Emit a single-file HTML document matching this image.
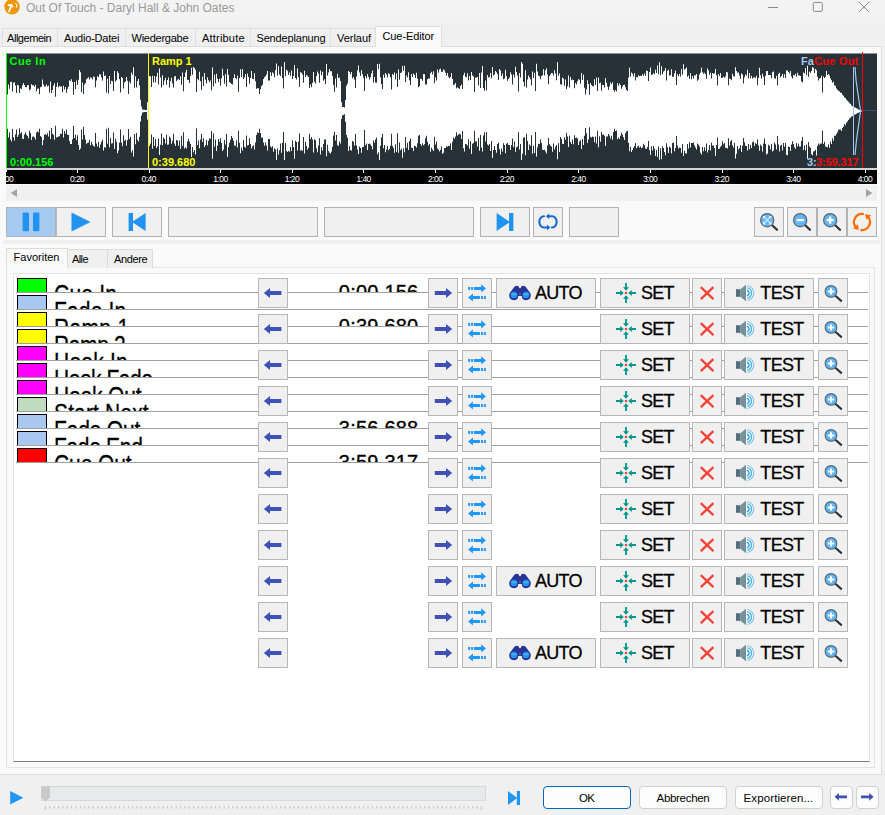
<!DOCTYPE html>
<html lang="de"><head><meta charset="utf-8"><title>Out Of Touch - Daryl Hall &amp; John Oates</title>
<style>
*{box-sizing:border-box;margin:0;padding:0}
html,body{width:885px;height:815px;overflow:hidden;background:#f0f0f0;font-family:"Liberation Sans",sans-serif;}
.abs{position:absolute}
#win{position:absolute;left:0;top:0;width:885px;height:815px;background:#f0f0f0;overflow:hidden}
#titlebar{position:absolute;left:0;top:0;width:885px;height:23px;background:#f3f3f3}
#title{position:absolute;left:26px;top:0.7px;font-size:12px;line-height:15px;color:#9a9a9a;white-space:nowrap;letter-spacing:-0.02px}
.tab{position:absolute;top:28px;height:19px;border:1px solid #e0e0e0;border-bottom:none;background:#f0f0f0;font-size:11px;line-height:18px;color:#000;white-space:nowrap;text-align:left}
.tab.sel{top:26px;height:21px;background:#fafafa;z-index:3;line-height:18px}
.wl{position:absolute;font-size:11px;line-height:12px;font-weight:bold;white-space:nowrap}
.rl{position:absolute;top:4px;font-size:8.5px;line-height:10px;color:#fff;text-align:center;letter-spacing:-0.55px;white-space:nowrap}
.itab{position:absolute;top:249px;height:19px;border:1px solid #dcdcdc;border-bottom:none;background:#f0f0f0;font-size:11px;line-height:19px;white-space:nowrap;color:#000;letter-spacing:-0.3px}
.itab.isel{top:248px;height:20px;background:#fafafa;line-height:16px}
.row{position:absolute;left:16px;width:852px;height:17px;border-bottom:1px solid #a0a0a0;overflow:hidden}
.sw{position:absolute;left:1px;top:2px;width:30px;height:20px;border:1px solid #000}
.nm{position:absolute;left:38px;top:2.6px;font-size:26px;line-height:30px;letter-spacing:0.37px;-webkit-text-stroke:0.3px #000;transform:scaleX(0.808);transform-origin:0 0;white-space:nowrap;color:#000}
.tm{position:absolute;left:322.8px;top:3.8px;font-size:20px;line-height:24px;letter-spacing:0.22px;-webkit-text-stroke:0.35px #000;white-space:nowrap;color:#000}
.bt{position:absolute;height:30px;border:1px solid #b6b6b6;background:#f0f0f0}
.bx{position:absolute;margin-top:-0.7px;height:30px;font-size:18px;line-height:30px;white-space:nowrap;color:#000;transform:scaleY(1.06);transform-origin:0 8px;-webkit-text-stroke:0.3px #000}
.wb{position:absolute;top:786px;height:23px;border:1px solid #d0d0d0;border-radius:4px;background:#fdfdfd;font-size:11.5px;line-height:22px;text-align:center;color:#000;white-space:nowrap;letter-spacing:-0.2px}
#page{position:absolute;left:0px;top:46px;width:882px;height:729px;background:#fafafa;border:1px solid #dedede;border-left:none}
</style></head>
<body>
<div id="win">
<div id="titlebar"></div>
<svg class="abs" style="left:0;top:0" width="24" height="20" viewBox="0 0 24 20"><circle cx="12.05" cy="6.8" r="7.75" fill="#ee960c"/><path d="M7.9 4.2 L12.1 4.1 L13.6 6.9 L12.3 7.7 L11.7 6.8 L9.9 12 Q9.4 12.8 8.6 12.3 Q8 11.9 8.3 11 L10.1 5.9 L8.2 6.2 Q7.3 5.2 7.9 4.2 Z" fill="#fff"/><path d="M15.1 2.9 Q17.7 3.5 17.5 5.6 L16.7 7.8 L15.7 7.5 L16.2 5.4 Q16 4.2 14.9 3.8 Z" fill="#fff"/></svg>
<div id="title">Out Of Touch - Daryl Hall &amp; John Oates</div>
<svg class="abs" style="left:760px;top:0" width="125" height="20" viewBox="0 0 125 20" fill="none" stroke="#8a8a8a" stroke-width="1"><path d="M8 7.5 H18"/><rect x="53.3" y="2.4" width="9" height="9" rx="1.2"/><path d="M99 2 L109 12 M109 2 L99 12"/></svg>
<div class="tab" style="left:2px;width:56px;padding-left:4px;letter-spacing:-0.45px">Allgemein</div>
<div class="tab" style="left:57px;width:69px;padding-left:6px;letter-spacing:-0.2px">Audio-Datei</div>
<div class="tab" style="left:125px;width:71px;padding-left:5.5px;letter-spacing:-0.25px">Wiedergabe</div>
<div class="tab" style="left:195px;width:56px;padding-left:6px;letter-spacing:0.2px">Attribute</div>
<div class="tab" style="left:250px;width:81px;padding-left:5.5px;letter-spacing:-0.17px">Sendeplanung</div>
<div class="tab" style="left:330px;width:47px;padding-left:6px;letter-spacing:-0.02px">Verlauf</div>
<div class="tab sel" style="left:375px;width:67px;padding-left:6.5px;letter-spacing:-0.1px">Cue-Editor</div>
<div id="page"></div>
<div class="abs" style="left:6px;top:53px;width:871px;height:115px;background:#263238;border-top:1px solid #8b9296"></div>
<svg class="abs" style="left:0;top:0" width="885" height="200" viewBox="0 0 885 200"><path d="M7 111.0V94.6H8V84.4H9V88.7H10V82.0H11V81.8H12V91.5H13V82.8H14V82.3H15V85.6H16V93.1H17V84.7H18V85.6H19V92.9H20V88.2H21V89.0H22V85.3H23V82.9H24V85.0H25V87.0H26V87.2H27V85.1H28V85.3H29V90.3H30V89.2H31V84.3H32V85.3H33V85.2H34V86.7H35V84.7H36V91.2H37V88.7H38V88.6H39V94.2H40V87.2H41V86.8H42V79.6H43V84.6H44V86.8H45V86.2H46V84.5H47V86.4H48V85.5H49V92.6H50V81.5H51V93.1H52V90.0H53V85.5H54V83.3H55V96.7H56V86.7H57V82.6H58V87.3H59V86.0H60V86.4H61V86.4H62V92.2H63V85.7H64V89.5H65V87.1H66V92.7H67V89.1H68V86.8H69V80.5H70V80.8H71V79.3H72V81.9H73V94.7H74V82.1H75V89.0H76V80.6H77V85.0H78V79.8H79V70.0H80V72.3H81V92.2H82V82.5H83V93.9H84V84.4H85V83.0H86V79.3H87V78.2H88V77.2H89V79.4H90V77.5H91V77.8H92V79.5H93V76.5H94V76.9H95V87.3H96V80.5H97V76.2H98V76.9H99V74.3H100V74.5H101V77.4H102V80.5H103V71.6H104V76.0H105V75.4H106V92.4H107V78.8H108V93.4H109V76.0H110V84.0H111V80.8H112V81.3H113V90.9H114V71.1H115V81.6H116V80.3H117V71.2H118V72.9H119V79.3H120V92.6H121V77.1H122V78.0H123V88.4H124V82.5H125V81.6H126V77.1H127V80.7H128V94.1H129V81.6H130V83.5H131V72.5H132V74.7H133V67.3H134V87.7H135V76.3H136V87.4H137V81.0H138V79.1H139V85.5H140V99.7H141V106.5H142V109.6H143V109.8H144V109.8H145V109.9H146V109.9H147V102.3H148V93.1H149V76.1H150V76.4H151V86.9H152V75.7H153V82.4H154V75.9H155V82.4H156V76.5H157V72.7H158V84.5H159V68.4H160V77.6H161V87.4H162V75.3H163V85.1H164V80.4H165V77.7H166V84.7H167V80.1H168V77.4H169V87.6H170V80.9H171V77.7H172V83.6H173V87.5H174V76.4H175V76.0H176V81.0H177V79.7H178V79.1H179V79.9H180V76.2H181V84.8H182V72.4H183V91.3H184V76.9H185V72.4H186V69.8H187V79.8H188V80.1H189V83.0H190V76.0H191V67.8H192V74.8H193V67.1H194V68.0H195V69.7H196V91.9H197V78.7H198V80.2H199V71.8H200V81.2H201V89.8H202V76.7H203V86.0H204V73.1H205V79.8H206V83.6H207V77.3H208V80.3H209V81.9H210V80.6H211V90.3H212V67.4H213V86.6H214V74.8H215V83.3H216V73.7H217V78.8H218V82.3H219V78.7H220V85.7H221V78.2H222V68.8H223V75.8H224V83.8H225V74.0H226V86.5H227V68.9H228V74.7H229V81.9H230V82.9H231V84.1H232V84.6H233V78.1H234V74.2H235V78.0H236V79.2H237V75.5H238V91.8H239V77.9H240V69.2H241V76.9H242V69.1H243V78.9H244V77.3H245V73.9H246V86.9H247V73.5H248V77.1H249V83.8H250V78.0H251V71.0H252V78.8H253V79.3H254V73.3H255V81.3H256V88.7H257V88.3H258V88.3H259V94.1H260V89.3H261V85.9H262V84.8H263V78.9H264V77.3H265V76.2H266V74.5H267V71.1H268V80.5H269V80.5H270V72.2H271V76.0H272V72.3H273V73.6H274V77.2H275V69.9H276V63.6H277V75.4H278V66.2H279V74.6H280V76.1H281V66.6H282V78.1H283V88.6H284V62.0H285V76.2H286V69.8H287V70.7H288V74.9H289V72.5H290V75.7H291V70.5H292V78.9H293V76.1H294V64.9H295V78.1H296V79.5H297V68.4H298V77.3H299V86.7H300V72.2H301V72.8H302V74.4H303V82.7H304V70.8H305V76.9H306V74.9H307V75.7H308V76.9H309V87.9H310V84.4H311V87.2H312V83.0H313V72.0H314V81.7H315V83.4H316V76.1H317V71.6H318V73.6H319V82.8H320V70.4H321V75.2H322V71.7H323V80.8H324V79.3H325V83.9H326V64.1H327V75.5H328V72.4H329V69.0H330V71.2H331V71.2H332V76.1H333V84.7H334V91.8H335V78.6H336V87.5H337V73.7H338V78.0H339V77.5H340V81.1H341V102.2H342V107.1H343V107.1H344V107.4H345V99.9H346V85.7H347V83.5H348V71.1H349V72.0H350V73.9H351V71.9H352V78.3H353V76.9H354V79.4H355V88.1H356V76.5H357V70.5H358V65.5H359V72.6H360V76.1H361V70.3H362V74.3H363V77.8H364V91.0H365V75.9H366V78.3H367V74.0H368V76.8H369V79.4H370V77.2H371V73.3H372V70.6H373V82.6H374V76.9H375V82.6H376V82.7H377V64.1H378V68.9H379V63.7H380V77.2H381V83.9H382V89.2H383V74.8H384V77.7H385V72.9H386V74.4H387V77.4H388V73.2H389V74.1H390V77.2H391V89.5H392V74.0H393V74.9H394V72.5H395V79.6H396V73.5H397V87.1H398V69.5H399V79.8H400V72.9H401V72.6H402V65.9H403V70.7H404V65.7H405V82.1H406V75.6H407V77.4H408V72.2H409V80.3H410V85.0H411V74.0H412V77.1H413V73.5H414V74.8H415V77.9H416V72.7H417V78.4H418V87.3H419V86.1H420V78.8H421V79.0H422V80.7H423V74.1H424V74.3H425V84.5H426V84.4H427V79.3H428V78.4H429V78.6H430V73.2H431V71.8H432V74.4H433V71.3H434V83.2H435V77.3H436V80.4H437V69.5H438V72.8H439V69.6H440V68.8H441V71.8H442V71.7H443V69.4H444V70.2H445V72.7H446V75.5H447V73.0H448V76.7H449V78.3H450V76.9H451V73.2H452V79.0H453V85.1H454V84.5H455V83.0H456V88.3H457V87.2H458V88.0H459V89.1H460V86.0H461V84.5H462V88.9H463V75.0H464V72.8H465V76.8H466V77.2H467V73.2H468V80.5H469V76.1H470V80.0H471V71.9H472V75.5H473V76.6H474V92.0H475V77.7H476V77.6H477V77.1H478V85.6H479V72.9H480V88.1H481V72.5H482V66.1H483V88.0H484V90.7H485V80.4H486V90.3H487V74.9H488V77.4H489V77.1H490V73.1H491V78.2H492V67.0H493V75.5H494V74.6H495V71.1H496V72.3H497V74.2H498V80.1H499V68.9H500V70.4H501V76.0H502V73.6H503V79.2H504V78.5H505V69.7H506V76.3H507V80.8H508V78.9H509V77.6H510V72.3H511V74.6H512V84.4H513V74.4H514V77.6H515V66.8H516V72.1H517V75.5H518V91.6H519V73.0H520V77.4H521V62.0H522V63.8H523V81.9H524V86.5H525V70.1H526V87.8H527V79.6H528V75.4H529V77.2H530V79.3H531V85.6H532V71.4H533V78.0H534V72.8H535V90.9H536V63.7H537V71.6H538V75.7H539V76.3H540V79.3H541V75.9H542V75.3H543V68.9H544V75.4H545V70.2H546V68.3H547V74.5H548V84.3H549V76.1H550V74.6H551V73.1H552V73.3H553V75.4H554V70.1H555V73.4H556V80.2H557V62.0H558V75.8H559V73.5H560V84.3H561V84.8H562V77.8H563V78.5H564V85.8H565V79.6H566V89.3H567V86.2H568V75.6H569V87.4H570V76.9H571V80.2H572V79.5H573V80.1H574V88.3H575V83.1H576V84.6H577V81.3H578V79.2H579V79.7H580V83.7H581V73.0H582V79.9H583V74.7H584V87.8H585V94.6H586V89.3H587V80.2H588V84.0H589V94.7H590V83.1H591V85.0H592V85.9H593V86.6H594V79.3H595V84.9H596V77.4H597V91.0H598V77.4H599V83.2H600V82.6H601V90.7H602V85.0H603V85.1H604V87.6H605V78.1H606V82.8H607V86.4H608V89.8H609V86.5H610V82.4H611V84.2H612V82.3H613V90.1H614V91.8H615V90.1H616V91.6H617V83.2H618V85.7H619V83.5H620V84.9H621V88.8H622V86.5H623V85.0H624V84.7H625V87.2H626V90.1H627V91.1H628V77.4H629V67.7H630V76.4H631V72.5H632V73.7H633V76.2H634V73.2H635V80.6H636V76.9H637V77.3H638V75.3H639V75.9H640V75.8H641V75.9H642V74.2H643V75.8H644V73.6H645V75.8H646V70.6H647V71.1H648V81.1H649V72.1H650V67.4H651V74.8H652V74.8H653V73.1H654V74.0H655V69.7H656V73.1H657V65.4H658V74.3H659V62.3H660V75.2H661V66.3H662V74.2H663V71.5H664V70.8H665V67.9H666V80.5H667V70.8H668V69.7H669V75.6H670V75.2H671V69.2H672V76.8H673V76.8H674V73.2H675V70.6H676V84.9H677V74.2H678V76.3H679V74.1H680V76.6H681V68.7H682V74.8H683V64.3H684V69.7H685V68.8H686V67.6H687V76.8H688V75.6H689V78.8H690V72.9H691V79.2H692V75.9H693V78.5H694V75.2H695V75.6H696V74.1H697V80.7H698V79.4H699V74.5H700V72.7H701V67.7H702V72.2H703V73.8H704V72.7H705V74.0H706V78.8H707V68.6H708V70.4H709V74.8H710V72.7H711V78.4H712V73.1H713V73.8H714V73.3H715V69.1H716V75.3H717V85.5H718V74.1H719V75.9H720V72.9H721V78.0H722V77.8H723V76.4H724V77.7H725V76.5H726V72.0H727V72.4H728V85.3H729V78.5H730V78.9H731V80.3H732V73.7H733V76.3H734V76.5H735V67.3H736V70.9H737V72.7H738V72.6H739V75.6H740V78.7H741V73.5H742V74.4H743V83.4H744V77.3H745V74.4H746V75.6H747V69.7H748V78.5H749V73.1H750V78.3H751V75.8H752V78.4H753V77.5H754V77.3H755V77.8H756V75.7H757V85.2H758V78.0H759V67.8H760V75.2H761V78.8H762V73.7H763V76.7H764V85.0H765V75.8H766V70.9H767V71.1H768V74.9H769V75.1H770V75.0H771V78.2H772V72.2H773V71.5H774V78.1H775V78.7H776V75.8H777V85.6H778V73.7H779V72.7H780V77.3H781V76.1H782V73.9H783V77.7H784V74.2H785V77.9H786V70.5H787V70.5H788V71.9H789V73.6H790V70.9H791V76.4H792V78.6H793V75.1H794V75.4H795V73.7H796V76.8H797V72.8H798V75.3H799V75.5H800V76.1H801V81.4H802V82.6H803V72.5H804V73.6H805V68.0H806V75.1H807V65.7H808V76.9H809V71.7H810V72.8H811V71.0H812V67.2H813V67.7H814V73.0H815V69.1H816V70.3H817V76.8H818V80.5H819V78.5H820V78.0H821V75.7H822V92.6H823V76.5H824V78.0H825V76.8H826V71.1H827V74.9H828V73.9H829V75.5H830V78.3H831V80.2H832V82.7H833V81.8H834V85.5H835V85.8H836V88.5H837V89.7H838V90.8H839V91.5H840V92.8H841V92.7H842V94.7H843V95.7H844V97.5H845V97.9H846V99.8H847V100.7H848V101.8H849V103.1H850V104.1H851V105.4H852V106.3H853V106.6H854V107.3H855V107.8H856V108.2H857V108.8H858V109.4H859V109.9H860V110.4H861V110.5H862V111.0V111.5H861V111.6H860V112.1H859V112.8H858V113.0H857V113.7H856V114.4H855V114.4H854V115.4H853V116.0H852V116.5H851V117.7H850V118.6H849V120.0H848V121.6H847V122.8H846V125.2H845V123.9H844V126.7H843V128.1H842V131.1H841V129.5H840V129.6H839V129.8H838V132.2H837V133.9H836V135.7H835V135.8H834V140.7H833V138.3H832V144.1H831V141.5H830V147.8H829V144.6H828V147.2H827V147.0H826V146.5H825V141.7H824V144.0H823V130.5H822V143.6H821V143.6H820V144.7H819V143.4H818V145.9H817V155.4H816V149.7H815V151.0H814V151.4H813V155.3H812V154.2H811V147.7H810V146.5H809V142.1H808V158.8H807V144.5H806V150.5H805V145.5H804V149.9H803V137.0H802V141.1H801V146.4H800V146.4H799V143.8H798V146.2H797V143.0H796V148.8H795V147.2H794V143.9H793V141.3H792V144.6H791V151.0H790V146.9H789V146.7H788V155.3H787V154.8H786V142.9H785V146.7H784V142.9H783V150.5H782V144.8H781V145.8H780V151.5H779V144.6H778V136.1H777V149.5H776V144.5H775V142.6H774V150.4H773V151.4H772V144.3H771V149.4H770V146.0H769V144.8H768V153.5H767V154.6H766V144.0H765V138.4H764V143.6H763V151.6H762V145.9H761V144.5H760V150.8H759V145.4H758V139.3H757V144.0H756V143.0H755V146.0H754V141.6H753V142.2H752V148.0H751V144.8H750V149.3H749V143.9H748V150.6H747V146.0H746V145.7H745V142.3H744V138.1H743V145.8H742V152.0H741V145.2H740V148.3H739V149.4H738V145.9H737V153.7H736V158.4H735V142.7H734V147.5H733V145.2H732V139.9H731V141.5H730V145.8H729V138.2H728V148.5H727V148.1H726V147.8H725V143.0H724V144.2H723V141.2H722V145.6H721V146.7H720V148.5H719V149.1H718V137.4H717V145.1H716V156.1H715V147.9H714V145.4H713V145.6H712V142.7H711V150.5H710V144.9H709V150.1H708V152.4H707V143.5H706V150.8H705V147.3H704V151.2H703V147.0H702V154.4H701V152.8H700V146.5H699V144.8H698V143.4H697V149.4H696V147.6H695V145.3H694V142.5H693V143.0H692V143.0H691V147.5H690V142.2H689V148.4H688V143.9H687V153.4H686V153.2H685V150.7H684V156.0H683V143.9H682V152.8H681V148.1H680V147.5H679V148.5H678V145.4H677V136.1H676V147.9H675V151.3H674V142.4H673V142.9H672V153.4H671V147.8H670V146.4H669V153.0H668V147.2H667V143.2H666V155.3H665V152.1H664V148.1H663V146.2H662V159.2H661V148.2H660V159.8H659V146.4H658V156.9H657V149.9H656V156.1H655V148.4H654V145.9H653V150.4H652V146.2H651V154.7H650V150.2H649V140.9H648V147.0H647V149.0H646V148.6H645V145.3H644V143.7H643V147.4H642V148.2H641V146.6H640V147.7H639V145.8H638V146.6H637V148.2H636V143.0H635V146.0H634V147.7H633V150.1H632V152.0H631V146.8H630V151.3H629V142.7H628V130.7H627V131.6H626V133.2H625V139.9H624V137.3H623V134.8H622V132.7H621V135.8H620V139.1H619V137.4H618V139.2H617V130.6H616V131.1H615V128.8H614V132.0H613V139.8H612V135.8H611V138.4H610V135.6H609V134.0H608V136.5H607V136.6H606V145.9H605V135.7H604V134.4H603V134.7H602V131.9H601V141.8H600V136.3H599V147.3H598V130.7H597V143.5H596V136.6H595V142.2H594V137.0H593V136.4H592V137.4H591V136.8H590V127.3H589V139.2H588V143.1H587V133.2H586V128.0H585V135.7H584V145.0H583V139.1H582V149.1H581V140.3H580V141.6H579V145.1H578V138.4H577V137.5H576V138.1H575V135.3H574V144.2H573V139.5H572V144.0H571V142.1H570V135.7H569V147.0H568V136.4H567V132.7H566V139.7H565V137.6H564V143.9H563V143.8H562V138.9H561V136.9H560V152.1H559V143.1H558V159.3H557V144.9H556V146.8H555V149.6H554V143.5H553V151.8H552V146.4H551V145.7H550V144.3H549V138.0H548V145.5H547V153.5H546V151.4H545V149.7H544V150.1H543V149.8H542V142.9H541V139.6H540V143.9H539V143.7H538V147.3H537V156.4H536V132.1H535V152.9H534V145.8H533V153.8H532V135.2H531V145.8H530V144.5H529V149.9H528V140.9H527V133.7H526V155.2H525V137.3H524V137.7H523V153.8H522V160.0H521V144.1H520V149.5H519V132.3H518V146.6H517V147.2H516V151.7H515V141.4H514V146.9H513V138.6H512V145.1H511V149.9H510V144.9H509V145.0H508V143.0H507V143.7H506V153.2H505V145.1H504V143.2H503V151.5H502V148.5H501V154.6H500V149.3H499V142.4H498V144.1H497V152.7H496V149.9H495V146.0H494V149.9H493V157.9H492V140.9H491V151.1H490V144.1H489V145.5H488V144.5H487V132.0H486V141.5H485V132.2H484V135.5H483V151.5H482V147.6H481V134.9H480V150.8H479V137.8H478V146.5H477V141.2H476V141.5H475V130.7H474V143.0H473V143.7H472V153.9H471V141.3H470V148.8H469V139.2H468V145.5H467V144.3H466V143.9H465V151.4H464V148.2H463V131.0H462V138.9H461V134.6H460V133.8H459V134.5H458V135.6H457V132.3H456V136.4H455V138.7H454V137.6H453V141.8H452V150.0H451V143.6H450V145.9H449V145.7H448V146.8H447V146.3H446V148.0H445V148.0H444V152.7H443V153.7H442V146.5H441V149.7H440V151.4H439V149.7H438V148.4H437V141.5H436V144.5H435V136.8H434V151.1H433V149.4H432V147.8H431V151.8H430V144.1H429V145.5H428V141.7H427V135.7H426V138.3H425V144.2H424V145.3H423V143.3H422V145.7H421V144.0H420V134.9H419V135.8H418V143.2H417V147.5H416V146.3H415V145.7H414V150.9H413V148.0H412V147.7H411V138.4H410V141.0H409V150.0H408V142.7H407V147.8H406V137.1H405V152.3H404V148.2H403V157.7H402V148.7H401V150.2H400V142.4H399V152.7H398V133.3H397V152.1H396V144.2H395V152.8H394V148.0H393V146.1H392V133.8H391V145.7H390V148.9H389V150.3H388V146.1H387V149.4H386V152.2H385V145.0H384V148.2H383V134.1H382V137.5H381V145.8H380V160.0H379V152.2H378V154.2H377V137.5H376V139.5H375V142.7H374V140.6H373V149.3H372V145.9H371V144.4H370V143.6H369V144.0H368V149.9H367V143.5H366V145.3H365V130.0H364V146.8H363V147.0H362V152.8H361V147.9H360V146.4H359V153.9H358V149.5H357V145.5H356V133.9H355V145.6H354V141.7H353V141.0H352V150.4H351V150.2H350V146.3H349V151.0H348V137.8H347V135.1H346V121.7H345V114.3H344V115.0H343V115.2H342V119.1H341V143.5H340V141.6H339V146.1H338V145.0H337V135.1H336V140.4H335V131.8H334V135.4H333V146.7H332V151.4H331V153.6H330V152.8H329V151.1H328V144.7H327V156.3H326V139.4H325V139.6H324V144.0H323V150.5H322V147.2H321V154.4H320V138.3H319V145.5H318V152.3H317V148.3H316V140.2H315V139.2H314V152.4H313V139.6H312V137.0H311V139.1H310V133.7H309V147.8H308V149.4H307V146.0H306V141.8H305V153.5H304V137.0H303V150.8H302V150.2H301V150.4H300V133.4H299V141.5H298V150.4H297V142.1H296V140.8H295V158.7H294V146.9H293V140.2H292V151.1H291V146.9H290V151.8H289V150.7H288V151.9H287V151.0H286V143.1H285V160.0H284V131.9H283V142.7H282V152.8H281V143.4H280V150.3H279V154.4H278V148.6H277V160.0H276V149.6H275V148.2H274V151.8H273V146.2H272V147.6H271V146.2H270V139.0H269V139.1H268V150.6H267V145.6H266V142.5H265V145.8H264V142.6H263V137.4H262V137.8H261V133.0H260V128.7H259V133.1H258V132.4H257V134.9H256V142.4H255V149.6H254V145.3H253V146.2H252V148.6H251V143.9H250V138.3H249V144.9H248V145.4H247V135.4H246V147.8H245V146.8H244V139.9H243V150.4H242V147.6H241V153.3H240V142.8H239V130.9H238V147.5H237V140.2H236V146.0H235V145.5H234V140.7H233V137.9H232V136.0H231V139.8H230V142.7H229V147.0H228V156.8H227V134.0H226V144.6H225V139.9H224V149.6H223V150.9H222V143.1H221V138.2H220V141.7H219V139.0H218V145.4H217V150.9H216V139.4H215V146.8H214V133.4H213V158.8H212V131.0H211V138.8H210V138.3H209V140.8H208V145.4H207V139.7H206V144.9H205V147.0H204V138.3H203V142.0H202V134.0H201V139.4H200V148.3H199V140.4H198V144.9H197V128.4H196V154.6H195V150.0H194V152.2H193V147.0H192V156.9H191V143.9H190V141.6H189V138.8H188V141.4H187V148.4H186V147.2H185V148.5H184V132.2H183V146.1H182V135.7H181V148.9H180V140.4H179V145.7H178V140.6H177V139.9H176V146.0H175V143.5H174V133.7H173V140.7H172V143.8H171V138.2H170V136.6H169V144.4H168V144.7H167V134.8H166V143.6H165V139.0H164V137.6H163V145.3H162V133.4H161V144.8H160V154.8H159V138.4H158V146.3H157V148.0H156V139.0H155V145.9H154V136.9H153V148.7H152V134.6H151V143.6H150V145.9H149V128.1H148V119.4H147V112.0H146V112.1H145V112.1H144V112.2H143V112.6H142V115.5H141V121.5H140V136.8H139V141.4H138V139.8H137V132.9H136V144.2H135V134.1H134V156.6H133V150.3H132V152.4H131V136.8H130V138.9H129V129.1H128V140.0H127V145.5H126V139.6H125V140.7H124V135.2H123V146.3H122V142.5H121V129.4H120V142.6H119V150.6H118V153.3H117V141.8H116V138.7H115V149.1H114V132.4H113V143.2H112V143.6H111V137.8H110V147.2H109V127.8H108V143.7H107V128.7H106V147.6H105V147.3H104V150.4H103V139.7H102V141.7H101V144.4H100V147.7H99V141.7H98V146.6H97V143.6H96V132.9H95V146.5H94V146.1H93V144.6H92V141.8H91V145.3H90V139.7H89V142.4H88V143.1H87V143.7H86V139.5H85V135.1H84V126.7H83V139.5H82V129.7H81V148.6H80V149.9H79V145.1H78V135.3H77V139.9H76V134.6H75V138.0H74V125.9H73V139.2H72V144.0H71V144.1H70V140.9H69V134.9H68V134.8H67V129.5H66V133.7H65V131.1H64V137.6H63V128.7H62V133.7H61V133.8H60V136.3H59V136.4H58V137.1H57V137.5H56V125.8H55V139.8H54V134.7H53V133.7H52V128.1H51V139.1H50V130.5H49V136.6H48V133.2H47V135.0H46V134.3H45V134.8H44V140.0H43V145.2H42V137.0H41V135.9H40V128.7H39V132.2H38V131.6H37V132.5H36V139.6H35V137.5H34V136.6H33V136.7H32V139.9H31V132.9H30V130.7H29V138.2H28V136.0H27V134.7H26V132.6H25V134.5H24V139.1H23V138.8H22V132.3H21V133.4H20V128.2H19V134.9H18V136.9H17V129.4H16V134.5H15V140.6H14V137.2H13V129.1H12V141.6H11V139.4H10V132.5H9V137.5H8V128.8H7Z" fill="#fff"/><path d="M863 110.5H877" stroke="#34506a" stroke-width="1"/><path d="M853.5 67V155" stroke="#a6c8f0" stroke-width="1" fill="none"/><path d="M855 67 L856 80 L860.5 111 L856.5 140 L855 155" stroke="#a6c8f0" stroke-width="1.2" fill="none"/></svg>
<div class="abs" style="left:6px;top:53px;width:1px;height:116px;background:#00ff00"></div>
<div class="abs" style="left:148px;top:53px;width:1px;height:116px;background:#ffff00"></div>
<div class="abs" style="left:862px;top:52px;width:1.4px;height:117px;background:#ff0000"></div>
<div class="wl" style="left:9.5px;top:55px;color:#00ff00;letter-spacing:0.5px">Cue In</div>
<div class="wl" style="left:10px;top:156px;color:#00ff00">0:00.156</div>
<div class="wl" style="left:152px;top:55px;color:#ffff00">Ramp 1</div>
<div class="wl" style="left:152px;top:156px;color:#ffff00">0:39.680</div>
<div class="wl" style="left:801px;top:55px;color:#a6c8f0">Fa</div>
<div class="wl" style="left:814px;top:55px;color:#ff0000;background:#263238;letter-spacing:0.25px">Cue Out</div>
<div class="wl" style="left:807px;top:156px;color:#a6c8f0">3:</div>
<div class="wl" style="left:816px;top:156px;color:#ff0000;background:#263238;letter-spacing:-0.1px">3:59.317</div>
<div class="abs" style="left:6px;top:168px;width:871px;height:2px;background:#d4d4d4"></div>
<div class="abs" style="left:6px;top:170px;width:871px;height:14px;background:#000;overflow:hidden"><div class="abs" style="left:-0.7px;top:0;width:1px;height:3px;background:#fff"></div><div class="rl" style="left:-1.2px;width:20px;text-align:left">00</div><div class="abs" style="left:0;top:0;width:1px;height:2px;background:#fff"></div><div class="abs" style="left:70.9px;top:0;width:1px;height:3px;background:#fff"></div><div class="rl" style="left:56.1px;width:30px">0:20</div><div class="abs" style="left:142.5px;top:0;width:1px;height:3px;background:#fff"></div><div class="rl" style="left:127.7px;width:30px">0:40</div><div class="abs" style="left:214.2px;top:0;width:1px;height:3px;background:#fff"></div><div class="rl" style="left:199.4px;width:30px">1:00</div><div class="abs" style="left:285.8px;top:0;width:1px;height:3px;background:#fff"></div><div class="rl" style="left:271.0px;width:30px">1:20</div><div class="abs" style="left:357.4px;top:0;width:1px;height:3px;background:#fff"></div><div class="rl" style="left:342.6px;width:30px">1:40</div><div class="abs" style="left:429.0px;top:0;width:1px;height:3px;background:#fff"></div><div class="rl" style="left:414.2px;width:30px">2:00</div><div class="abs" style="left:500.6px;top:0;width:1px;height:3px;background:#fff"></div><div class="rl" style="left:485.8px;width:30px">2:20</div><div class="abs" style="left:572.3px;top:0;width:1px;height:3px;background:#fff"></div><div class="rl" style="left:557.5px;width:30px">2:40</div><div class="abs" style="left:643.9px;top:0;width:1px;height:3px;background:#fff"></div><div class="rl" style="left:629.1px;width:30px">3:00</div><div class="abs" style="left:715.5px;top:0;width:1px;height:3px;background:#fff"></div><div class="rl" style="left:700.7px;width:30px">3:20</div><div class="abs" style="left:787.1px;top:0;width:1px;height:3px;background:#fff"></div><div class="rl" style="left:772.3px;width:30px">3:40</div><div class="abs" style="left:858.7px;top:0;width:1px;height:3px;background:#fff"></div><div class="rl" style="left:843.9px;width:30px">4:00</div></div>
<div class="abs" style="left:6px;top:185px;width:871px;height:16px;background:#f0f0f0"></div>
<svg class="abs" style="left:6px;top:184px" width="871" height="17" viewBox="0 0 871 17"><path d="M4.7 9 L11 5 V13 Z" fill="#a3a3a3"/><path d="M866.3 9 L860 5 V13 Z" fill="#a3a3a3"/></svg>
<div style="position:absolute;top:207px;height:30px;border:1px solid #b2b2b2;background:#f0f0f0;left:6px;width:50px;background:#a7caf0;border-color:#b0b4b8"></div>
<div style="position:absolute;top:207px;height:30px;border:1px solid #b2b2b2;background:#f0f0f0;left:56px;width:50px;border-left-color:#b9b9b9"></div>
<div style="position:absolute;top:207px;height:30px;border:1px solid #b2b2b2;background:#f0f0f0;left:112px;width:50px;"></div>
<div style="position:absolute;top:207px;height:30px;border:1px solid #b2b2b2;background:#f0f0f0;left:168px;width:150px;"></div>
<div style="position:absolute;top:207px;height:30px;border:1px solid #b2b2b2;background:#f0f0f0;left:324px;width:150px;"></div>
<div style="position:absolute;top:207px;height:30px;border:1px solid #b2b2b2;background:#f0f0f0;left:480px;width:50px;"></div>
<div style="position:absolute;top:207px;height:30px;border:1px solid #b2b2b2;background:#f0f0f0;left:533px;width:30px;"></div>
<div style="position:absolute;top:207px;height:30px;border:1px solid #b2b2b2;background:#f0f0f0;left:569px;width:50px;"></div>
<div style="position:absolute;top:207px;height:30px;border:1px solid #b2b2b2;background:#f0f0f0;left:754px;width:30px;"></div>
<div style="position:absolute;top:207px;height:30px;border:1px solid #b2b2b2;background:#f0f0f0;left:787px;width:30px;"></div>
<div style="position:absolute;top:207px;height:30px;border:1px solid #b2b2b2;background:#f0f0f0;left:817px;width:30px;"></div>
<div style="position:absolute;top:207px;height:30px;border:1px solid #b2b2b2;background:#f0f0f0;left:847px;width:30px;"></div>
<svg class="abs" style="left:0;top:200px" width="885" height="45" viewBox="0 200 885 45"><rect x="22.6" y="212.6" width="6.4" height="18.6" rx="1" fill="#2093f1"/><rect x="33" y="212.6" width="6.4" height="18.6" rx="1" fill="#2093f1"/><path d="M71.8 213 L90 222 L71.8 231 Z" fill="#2093f1" stroke="#2093f1" stroke-width="0.6" stroke-linejoin="round"/><rect x="128.6" y="213" width="4.4" height="18" fill="#2093f1"/><path d="M145.6 213 L132 222 L145.6 231 Z" fill="#2093f1"/><rect x="509" y="213" width="4.4" height="18" fill="#2093f1"/><path d="M496.6 213 L510 222 L496.6 231 Z" fill="#2093f1"/><g fill="none" stroke="#1668cf" stroke-width="2.1" stroke-linecap="round"><path d="M544 216.2 A4.7 5.65 0 0 0 544 227.5 H547"/><path d="M552 227.5 A4.7 5.65 0 0 0 552 216.2 H549"/></g><path d="M547 224.6 L550.4 227.5 L547 230.2 Z" fill="#1668cf"/><path d="M549.2 213.6 L545.8 216.3 L549.2 219 Z" fill="#1668cf"/><path d="M772.2 225.2 L777.0 229.79999999999998" stroke="#263238" stroke-width="2.2" stroke-linecap="round"/><circle cx="767.2" cy="220.2" r="6.6" fill="#64b5f6" stroke="#5a666c" stroke-width="1.2"/><path d="M764.2 217.2 L770.2 223.2 M770.2 217.2 L764.2 223.2" stroke="#d6ecfd" stroke-width="1.1"/><path d="M763.0 216.0 L765.8000000000001 216.0 L763.0 218.79999999999998 Z" fill="#fff"/><path d="M771.4000000000001 216.0 L768.6 216.0 L771.4000000000001 218.79999999999998 Z" fill="#fff"/><path d="M763.0 224.39999999999998 L765.8000000000001 224.39999999999998 L763.0 221.6 Z" fill="#fff"/><path d="M771.4000000000001 224.39999999999998 L768.6 224.39999999999998 L771.4000000000001 221.6 Z" fill="#fff"/><path d="M805.2 225.2 L810.0 229.79999999999998" stroke="#263238" stroke-width="2.2" stroke-linecap="round"/><circle cx="800.2" cy="220.2" r="6.6" fill="#64b5f6" stroke="#5a666c" stroke-width="1.2"/><rect x="796.6" y="219.1" width="7.2" height="2.2" rx="0.6" fill="#fff"/><path d="M835.2 225.2 L840.0 229.79999999999998" stroke="#263238" stroke-width="2.2" stroke-linecap="round"/><circle cx="830.2" cy="220.2" r="6.6" fill="#64b5f6" stroke="#5a666c" stroke-width="1.2"/><rect x="826.6" y="219.1" width="7.2" height="2.2" rx="0.6" fill="#fff"/><rect x="829.1" y="216.6" width="2.2" height="7.2" rx="0.6" fill="#fff"/><g fill="none" stroke="#ff6d00" stroke-width="2.2"><path d="M863.8 214.1 A8 8 0 0 0 856.2 227.4"/><path d="M860.5 229.9 A8 8 0 0 0 868.3 217.2"/></g><path d="M858.8 229.9 L852.9 228.5 L857.9 224.2 Z" fill="#ff6d00"/><path d="M865 214.2 L871.2 215.2 L866.5 219.8 Z" fill="#ff6d00"/></svg>
<div class="abs" style="left:3px;top:240px;width:877px;height:4px;background:#f0f0f0"></div>
<div class="abs" style="left:6px;top:267px;width:869px;height:501px;border:1px solid #e4e4e4;background:#fafafa"></div>
<div class="itab" style="left:67px;width:41px;padding-left:4px;letter-spacing:-0.6px">Alle</div>
<div class="itab" style="left:107px;width:46px;padding-left:6px;letter-spacing:-0.35px">Andere</div>
<div class="itab isel" style="left:6px;width:62px;padding-left:6.6px;letter-spacing:0px">Favoriten</div>
<div class="abs" style="left:13px;top:273px;width:857px;height:489px;border:1px solid #e3e3e3;border-bottom:1px solid #7c7c7c;background:#fff"></div>
<div class="row" style="top:276px"><div class="sw" style="background:#00ff00"></div><div class="nm" style="letter-spacing:0.27px">Cue In</div><div class="tm">0:00.156</div></div>
<div class="row" style="top:293px"><div class="sw" style="background:#a8c8f0"></div><div class="nm" style="letter-spacing:0.21px">Fade In</div></div>
<div class="row" style="top:310px"><div class="sw" style="background:#ffff00"></div><div class="nm" style="letter-spacing:0.38px">Ramp 1</div><div class="tm">0:39.680</div></div>
<div class="row" style="top:327px"><div class="sw" style="background:#ffff00"></div><div class="nm" style="letter-spacing:-0.47px">Ramp 2</div></div>
<div class="row" style="top:344px"><div class="sw" style="background:#ff00ff"></div><div class="nm" style="letter-spacing:0.27px">Hook In</div></div>
<div class="row" style="top:361px"><div class="sw" style="background:#ff00ff"></div><div class="nm" style="letter-spacing:-0.59px">Hook Fade</div></div>
<div class="row" style="top:378px"><div class="sw" style="background:#ff00ff"></div><div class="nm" style="letter-spacing:-0.22px">Hook Out</div></div>
<div class="row" style="top:395px"><div class="sw" style="background:#c0dcc0"></div><div class="nm" style="letter-spacing:0.17px">Start Next</div></div>
<div class="row" style="top:412px"><div class="sw" style="background:#a8c8f0"></div><div class="nm" style="letter-spacing:-0.24px">Fade Out</div><div class="tm">3:56.688</div></div>
<div class="row" style="top:429px"><div class="sw" style="background:#a8c8f0"></div><div class="nm" style="letter-spacing:-0.4px">Fade End</div></div>
<div class="row" style="top:446px"><div class="sw" style="background:#ff0000"></div><div class="nm" style="letter-spacing:-0.14px">Cue Out</div><div class="tm">3:59.317</div></div>
<div class="bt" style="left:258px;top:278px;width:30px"></div><div class="bt" style="left:428px;top:278px;width:30px"></div><div class="bt" style="left:462px;top:278px;width:30px"></div><div class="bt" style="left:600px;top:278px;width:90px"></div><div class="bt" style="left:692px;top:278px;width:30px"></div><div class="bt" style="left:724px;top:278px;width:90px"></div><div class="bt" style="left:818px;top:278px;width:30px"></div><div class="bt" style="left:496px;top:278px;width:100px"></div><div class="bx" style="left:535px;top:278px;letter-spacing:-0.7px">AUTO</div><div class="bx" style="left:641px;top:278px;letter-spacing:-0.7px">SET</div><div class="bx" style="left:760.3px;top:278px;letter-spacing:-0.65px">TEST</div>
<div class="bt" style="left:258px;top:314px;width:30px"></div><div class="bt" style="left:428px;top:314px;width:30px"></div><div class="bt" style="left:462px;top:314px;width:30px"></div><div class="bt" style="left:600px;top:314px;width:90px"></div><div class="bt" style="left:692px;top:314px;width:30px"></div><div class="bt" style="left:724px;top:314px;width:90px"></div><div class="bt" style="left:818px;top:314px;width:30px"></div><div class="bx" style="left:641px;top:314px;letter-spacing:-0.7px">SET</div><div class="bx" style="left:760.3px;top:314px;letter-spacing:-0.65px">TEST</div>
<div class="bt" style="left:258px;top:350px;width:30px"></div><div class="bt" style="left:428px;top:350px;width:30px"></div><div class="bt" style="left:462px;top:350px;width:30px"></div><div class="bt" style="left:600px;top:350px;width:90px"></div><div class="bt" style="left:692px;top:350px;width:30px"></div><div class="bt" style="left:724px;top:350px;width:90px"></div><div class="bt" style="left:818px;top:350px;width:30px"></div><div class="bx" style="left:641px;top:350px;letter-spacing:-0.7px">SET</div><div class="bx" style="left:760.3px;top:350px;letter-spacing:-0.65px">TEST</div>
<div class="bt" style="left:258px;top:386px;width:30px"></div><div class="bt" style="left:428px;top:386px;width:30px"></div><div class="bt" style="left:462px;top:386px;width:30px"></div><div class="bt" style="left:600px;top:386px;width:90px"></div><div class="bt" style="left:692px;top:386px;width:30px"></div><div class="bt" style="left:724px;top:386px;width:90px"></div><div class="bt" style="left:818px;top:386px;width:30px"></div><div class="bx" style="left:641px;top:386px;letter-spacing:-0.7px">SET</div><div class="bx" style="left:760.3px;top:386px;letter-spacing:-0.65px">TEST</div>
<div class="bt" style="left:258px;top:422px;width:30px"></div><div class="bt" style="left:428px;top:422px;width:30px"></div><div class="bt" style="left:462px;top:422px;width:30px"></div><div class="bt" style="left:600px;top:422px;width:90px"></div><div class="bt" style="left:692px;top:422px;width:30px"></div><div class="bt" style="left:724px;top:422px;width:90px"></div><div class="bt" style="left:818px;top:422px;width:30px"></div><div class="bx" style="left:641px;top:422px;letter-spacing:-0.7px">SET</div><div class="bx" style="left:760.3px;top:422px;letter-spacing:-0.65px">TEST</div>
<div class="bt" style="left:258px;top:458px;width:30px"></div><div class="bt" style="left:428px;top:458px;width:30px"></div><div class="bt" style="left:462px;top:458px;width:30px"></div><div class="bt" style="left:600px;top:458px;width:90px"></div><div class="bt" style="left:692px;top:458px;width:30px"></div><div class="bt" style="left:724px;top:458px;width:90px"></div><div class="bt" style="left:818px;top:458px;width:30px"></div><div class="bx" style="left:641px;top:458px;letter-spacing:-0.7px">SET</div><div class="bx" style="left:760.3px;top:458px;letter-spacing:-0.65px">TEST</div>
<div class="bt" style="left:258px;top:494px;width:30px"></div><div class="bt" style="left:428px;top:494px;width:30px"></div><div class="bt" style="left:462px;top:494px;width:30px"></div><div class="bt" style="left:600px;top:494px;width:90px"></div><div class="bt" style="left:692px;top:494px;width:30px"></div><div class="bt" style="left:724px;top:494px;width:90px"></div><div class="bt" style="left:818px;top:494px;width:30px"></div><div class="bx" style="left:641px;top:494px;letter-spacing:-0.7px">SET</div><div class="bx" style="left:760.3px;top:494px;letter-spacing:-0.65px">TEST</div>
<div class="bt" style="left:258px;top:530px;width:30px"></div><div class="bt" style="left:428px;top:530px;width:30px"></div><div class="bt" style="left:462px;top:530px;width:30px"></div><div class="bt" style="left:600px;top:530px;width:90px"></div><div class="bt" style="left:692px;top:530px;width:30px"></div><div class="bt" style="left:724px;top:530px;width:90px"></div><div class="bt" style="left:818px;top:530px;width:30px"></div><div class="bx" style="left:641px;top:530px;letter-spacing:-0.7px">SET</div><div class="bx" style="left:760.3px;top:530px;letter-spacing:-0.65px">TEST</div>
<div class="bt" style="left:258px;top:566px;width:30px"></div><div class="bt" style="left:428px;top:566px;width:30px"></div><div class="bt" style="left:462px;top:566px;width:30px"></div><div class="bt" style="left:600px;top:566px;width:90px"></div><div class="bt" style="left:692px;top:566px;width:30px"></div><div class="bt" style="left:724px;top:566px;width:90px"></div><div class="bt" style="left:818px;top:566px;width:30px"></div><div class="bt" style="left:496px;top:566px;width:100px"></div><div class="bx" style="left:535px;top:566px;letter-spacing:-0.7px">AUTO</div><div class="bx" style="left:641px;top:566px;letter-spacing:-0.7px">SET</div><div class="bx" style="left:760.3px;top:566px;letter-spacing:-0.65px">TEST</div>
<div class="bt" style="left:258px;top:602px;width:30px"></div><div class="bt" style="left:428px;top:602px;width:30px"></div><div class="bt" style="left:462px;top:602px;width:30px"></div><div class="bt" style="left:600px;top:602px;width:90px"></div><div class="bt" style="left:692px;top:602px;width:30px"></div><div class="bt" style="left:724px;top:602px;width:90px"></div><div class="bt" style="left:818px;top:602px;width:30px"></div><div class="bx" style="left:641px;top:602px;letter-spacing:-0.7px">SET</div><div class="bx" style="left:760.3px;top:602px;letter-spacing:-0.65px">TEST</div>
<div class="bt" style="left:258px;top:638px;width:30px"></div><div class="bt" style="left:428px;top:638px;width:30px"></div><div class="bt" style="left:462px;top:638px;width:30px"></div><div class="bt" style="left:600px;top:638px;width:90px"></div><div class="bt" style="left:692px;top:638px;width:30px"></div><div class="bt" style="left:724px;top:638px;width:90px"></div><div class="bt" style="left:818px;top:638px;width:30px"></div><div class="bt" style="left:496px;top:638px;width:100px"></div><div class="bx" style="left:535px;top:638px;letter-spacing:-0.7px">AUTO</div><div class="bx" style="left:641px;top:638px;letter-spacing:-0.7px">SET</div><div class="bx" style="left:760.3px;top:638px;letter-spacing:-0.65px">TEST</div>
<svg class="abs" style="left:0;top:270px" width="885" height="410" viewBox="0 270 885 410"><defs><g id="aL"><path d="M281.4 291.1 H270 V288 L263.8 293 L270 298 V294.9 H281.4 Z" fill="#3f51b5"/></g><g id="aR"><path d="M434.8 291.1 H446 V288 L452.2 293 L446 298 V294.9 H434.8 Z" fill="#3f51b5"/></g><g id="sw" fill="#2196f3"><rect x="468.1" y="287" width="2" height="2.9"/><rect x="471.1" y="287" width="2" height="2.9"/><path d="M474 287 H481.2 V284.3 L485.9 288.45 L481.2 292.4 V289.9 H474 Z"/><rect x="481" y="296.1" width="2" height="2.9"/><rect x="483.9" y="296.1" width="2" height="2.9"/><path d="M479.9 296.1 H472.9 V293.6 L468.1 297.55 L472.9 301.6 V299 H479.9 Z"/></g><g id="bi"><path d="M514.6 286.4 Q516.8 285.2 518.8 286.4 L519.4 288.2 H520.6 L521.2 286.4 Q523.2 285.2 525.4 286.4 L530.4 293.2 Q531.4 296 530 298.4 Q527.8 300.6 524.6 300 Q521.8 299 521.6 296 H518.4 Q518.2 299 515.4 300 Q512.2 300.6 510 298.4 Q508.6 296 509.6 293.2 Z" fill="#283593"/><circle cx="514" cy="295" r="3.3" fill="#2196f3"/><circle cx="526" cy="295" r="3.3" fill="#2196f3"/><path d="M511.6 294.3 H516.4 M523.6 294.3 H528.4" stroke="#64b5f6" stroke-width="1.2"/><rect x="519.4" y="293.6" width="1.2" height="1.4" fill="#7986cb"/></g><g id="se"><g fill="#00968a"><path d="M625.1 283 H626.9 V287.2 H629 L626 290.8 L623 287.2 H625.1 Z" transform="rotate(0 626 293)"/><path d="M625.1 283 H626.9 V287.2 H629 L626 290.8 L623 287.2 H625.1 Z" transform="rotate(90 626 293)"/><path d="M625.1 283 H626.9 V287.2 H629 L626 290.8 L623 287.2 H625.1 Z" transform="rotate(180 626 293)"/><path d="M625.1 283 H626.9 V287.2 H629 L626 290.8 L623 287.2 H625.1 Z" transform="rotate(270 626 293)"/></g><circle cx="626" cy="293" r="1.3" fill="#f44336"/></g><g id="xx"><path d="M700.8 287.2 L713.4 299.2 M713.4 287.2 L700.8 299.2" stroke="#f44336" stroke-width="2.3" fill="none"/></g><g id="sp"><path d="M736 289.2 H740.2 V296.8 H736 Z" fill="#546e7a"/><path d="M740.2 289.2 L746 284.7 V301.2 L740.2 296.8 Z" fill="#78909c"/><g fill="none" stroke-width="1.1"><path d="M747 290.2 A2.9 2.9 0 0 1 747 295.8" stroke="#0288d1"/><path d="M747.2 287.8 A5.3 5.3 0 0 1 747.2 298.2" stroke="#29b6f6"/><path d="M747.4 285.5 A7.6 7.6 0 0 1 747.4 300.5" stroke="#81c4ec"/></g></g><g id="mg"><path d="M835.6 296 L841.2 300.9" stroke="#263238" stroke-width="2.1" stroke-linecap="round"/><circle cx="831" cy="291.4" r="5.8" fill="#64b5f6" stroke="#546e7a" stroke-width="1.2"/><rect x="827.8" y="290.4" width="6.4" height="2" rx="0.5" fill="#fff"/><rect x="830" y="288.2" width="2" height="6.4" rx="0.5" fill="#fff"/></g></defs><use href="#aL" y="0"/><use href="#aR" y="0"/><use href="#sw" y="0"/><use href="#se" y="0"/><use href="#xx" y="0"/><use href="#sp" y="0"/><use href="#mg" y="0"/><use href="#bi" y="0"/><use href="#aL" y="36"/><use href="#aR" y="36"/><use href="#sw" y="36"/><use href="#se" y="36"/><use href="#xx" y="36"/><use href="#sp" y="36"/><use href="#mg" y="36"/><use href="#aL" y="72"/><use href="#aR" y="72"/><use href="#sw" y="72"/><use href="#se" y="72"/><use href="#xx" y="72"/><use href="#sp" y="72"/><use href="#mg" y="72"/><use href="#aL" y="108"/><use href="#aR" y="108"/><use href="#sw" y="108"/><use href="#se" y="108"/><use href="#xx" y="108"/><use href="#sp" y="108"/><use href="#mg" y="108"/><use href="#aL" y="144"/><use href="#aR" y="144"/><use href="#sw" y="144"/><use href="#se" y="144"/><use href="#xx" y="144"/><use href="#sp" y="144"/><use href="#mg" y="144"/><use href="#aL" y="180"/><use href="#aR" y="180"/><use href="#sw" y="180"/><use href="#se" y="180"/><use href="#xx" y="180"/><use href="#sp" y="180"/><use href="#mg" y="180"/><use href="#aL" y="216"/><use href="#aR" y="216"/><use href="#sw" y="216"/><use href="#se" y="216"/><use href="#xx" y="216"/><use href="#sp" y="216"/><use href="#mg" y="216"/><use href="#aL" y="252"/><use href="#aR" y="252"/><use href="#sw" y="252"/><use href="#se" y="252"/><use href="#xx" y="252"/><use href="#sp" y="252"/><use href="#mg" y="252"/><use href="#aL" y="288"/><use href="#aR" y="288"/><use href="#sw" y="288"/><use href="#se" y="288"/><use href="#xx" y="288"/><use href="#sp" y="288"/><use href="#mg" y="288"/><use href="#bi" y="288"/><use href="#aL" y="324"/><use href="#aR" y="324"/><use href="#sw" y="324"/><use href="#se" y="324"/><use href="#xx" y="324"/><use href="#sp" y="324"/><use href="#mg" y="324"/><use href="#aL" y="360"/><use href="#aR" y="360"/><use href="#sw" y="360"/><use href="#se" y="360"/><use href="#xx" y="360"/><use href="#sp" y="360"/><use href="#mg" y="360"/><use href="#bi" y="360"/></svg>
<div class="wb" style="left:543px;width:88px;border-color:#0067c0;letter-spacing:-0.8px;padding-right:1px">OK</div><div class="wb" style="left:639px;width:88px;letter-spacing:-0.3px">Abbrechen</div><div class="wb" style="left:735px;width:88px;letter-spacing:0.1px;padding-right:1px">Exportieren...</div><div class="wb" style="left:830px;width:23px"></div><div class="wb" style="left:856px;width:23px"></div>
<svg class="abs" style="left:0;top:780px" width="885" height="35" viewBox="0 780 885 35"><path d="M10.2 791 L23.4 797.8 L10.2 804.6 Z" fill="#2196f3"/><rect x="41.5" y="786.5" width="444" height="14" fill="#e7eaeb" stroke="#d8d8d8" stroke-width="1"/><path d="M41.2 786.6 H49.9 V797.6 L45.5 801.8 L41.2 797.6 Z" fill="#c9c9c9"/><path d="M45.40 806V810M49.76 806V808.6M54.12 806V808.6M58.48 806V808.6M62.84 806V808.6M67.20 806V808.6M71.56 806V808.6M75.92 806V808.6M80.28 806V808.6M84.64 806V808.6M89.00 806V808.6M93.36 806V808.6M97.72 806V808.6M102.08 806V808.6M106.44 806V808.6M110.80 806V808.6M115.16 806V808.6M119.52 806V808.6M123.88 806V808.6M128.24 806V808.6M132.60 806V808.6M136.96 806V808.6M141.32 806V808.6M145.68 806V808.6M150.04 806V808.6M154.40 806V808.6M158.76 806V808.6M163.12 806V808.6M167.48 806V808.6M171.84 806V808.6M176.20 806V808.6M180.56 806V808.6M184.92 806V808.6M189.28 806V808.6M193.64 806V808.6M198.00 806V808.6M202.36 806V808.6M206.72 806V808.6M211.08 806V808.6M215.44 806V808.6M219.80 806V808.6M224.16 806V808.6M228.52 806V808.6M232.88 806V808.6M237.24 806V808.6M241.60 806V808.6M245.96 806V808.6M250.32 806V808.6M254.68 806V808.6M259.04 806V808.6M263.40 806V808.6M267.76 806V808.6M272.12 806V808.6M276.48 806V808.6M280.84 806V808.6M285.20 806V808.6M289.56 806V808.6M293.92 806V808.6M298.28 806V808.6M302.64 806V808.6M307.00 806V808.6M311.36 806V808.6M315.72 806V808.6M320.08 806V808.6M324.44 806V808.6M328.80 806V808.6M333.16 806V808.6M337.52 806V808.6M341.88 806V808.6M346.24 806V808.6M350.60 806V808.6M354.96 806V808.6M359.32 806V808.6M363.68 806V808.6M368.04 806V808.6M372.40 806V808.6M376.76 806V808.6M381.12 806V808.6M385.48 806V808.6M389.84 806V808.6M394.20 806V808.6M398.56 806V808.6M402.92 806V808.6M407.28 806V808.6M411.64 806V808.6M416.00 806V808.6M420.36 806V808.6M424.72 806V808.6M429.08 806V808.6M433.44 806V808.6M437.80 806V808.6M442.16 806V808.6M446.52 806V808.6M450.88 806V808.6M455.24 806V808.6M459.60 806V808.6M463.96 806V808.6M468.32 806V808.6M472.68 806V808.6M477.04 806V808.6M481.40 806V810" stroke="#c2c2c2" stroke-width="1" fill="none"/><path d="M508 791 L517.2 798 L508 805 Z" fill="#2196f3"/><rect x="516.8" y="791" width="3.2" height="14" fill="#2196f3"/><path d="M847 795.5 H838.9 V793 L834.6 796.85 L838.9 800.7 V798.3 H847 Z" fill="#3f51b5"/><path d="M861 795.5 H869.2 V793 L873.6 796.85 L869.2 800.7 V798.3 H861 Z" fill="#3f51b5"/></svg>
</div>
</body></html>
